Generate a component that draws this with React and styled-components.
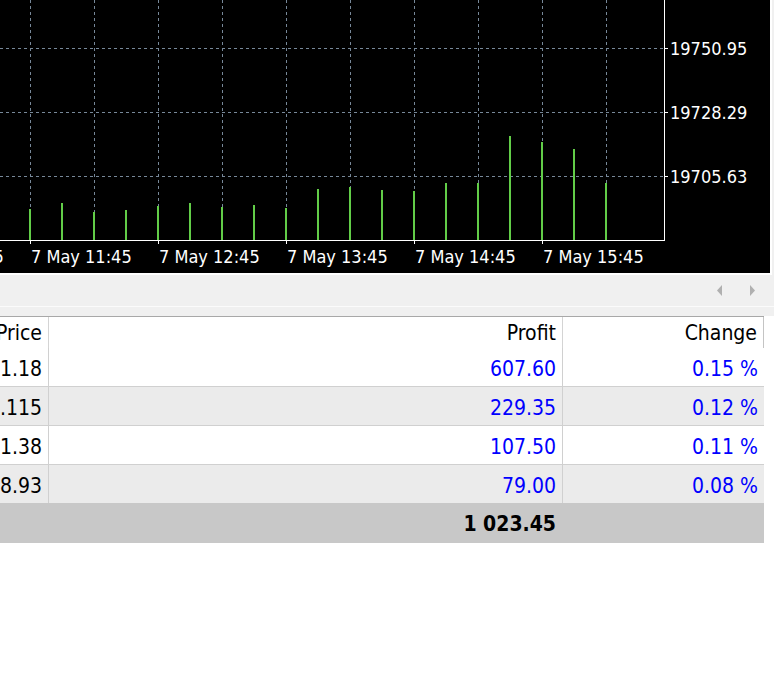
import React from 'react';
import styled, { createGlobalStyle } from 'styled-components';

const GlobalStyle = createGlobalStyle`
  html, body {
    margin: 0;
    padding: 0;
    background: #ffffff;
  }
  body {
    font-family: "DejaVu Sans Condensed", "DejaVu Sans", sans-serif;
  }
`;

// volume bars: x position and top of each bar (axis sits at y=240)
const bars = [
  [30, 209], [62, 203], [94, 212], [126, 210], [158, 206], [190, 203],
  [222, 207], [254, 205], [286, 208], [318, 189], [350, 187], [382, 190],
  [414, 191], [446, 183], [478, 183], [510, 136], [542, 142], [574, 149],
  [606, 183],
];

const priceLevels = [
  { y: 48, label: '19750.95' },
  { y: 112, label: '19728.29' },
  { y: 176, label: '19705.63' },
];

const timeLabels = [
  { x: -98, label: '7 May 10:45' },
  { x: 30, label: '7 May 11:45' },
  { x: 158, label: '7 May 12:45' },
  { x: 286, label: '7 May 13:45' },
  { x: 414, label: '7 May 14:45' },
  { x: 542, label: '7 May 15:45' },
];

const rows = [
  { price: '1.18', profit: '607.60', change: '0.15 %' },
  { price: '.115', profit: '229.35', change: '0.12 %' },
  { price: '1.38', profit: '107.50', change: '0.11 %' },
  { price: '8.93', profit: '79.00', change: '0.08 %' },
];

const PLOT_W = 664;
const PLOT_H = 240;

const VolumeChart = () => {
  const gridX = [];
  for (let x = 30; x < PLOT_W; x += 64) gridX.push(x);
  return (
    <ChartSvg width="770" height="273" viewBox="0 0 770 273">
      <rect x="0" y="0" width="770" height="273" fill="#000" />
      {gridX.map((x) => (
        <line key={`v${x}`} x1={x + 0.5} y1="0" x2={x + 0.5} y2={PLOT_H} stroke="#778899" strokeDasharray="3 3" />
      ))}
      {priceLevels.map((p) => (
        <line key={`h${p.y}`} x1="0" y1={p.y + 0.5} x2={PLOT_W} y2={p.y + 0.5} stroke="#778899" strokeDasharray="3 3" />
      ))}
      {bars.map(([x, top]) => (
        <rect key={`b${x}`} x={x - 1} y={top} width="2" height={PLOT_H - top} fill="#62cd48" />
      ))}
      <line x1={PLOT_W + 0.5} y1="0" x2={PLOT_W + 0.5} y2={PLOT_H + 1} stroke="#fff" />
      <line x1="0" y1={PLOT_H + 0.5} x2={PLOT_W + 1} y2={PLOT_H + 0.5} stroke="#fff" />
      {priceLevels.map((p) => (
        <g key={`l${p.y}`}>
          <line x1={PLOT_W} y1={p.y + 0.5} x2={PLOT_W + 4} y2={p.y + 0.5} stroke="#fff" />
          <AxisText x="670" y={p.y + 7}>{p.label}</AxisText>
        </g>
      ))}
      {timeLabels.map((t) => (
        <g key={`t${t.x}`}>
          <line x1={t.x + 0.5} y1={PLOT_H} x2={t.x + 0.5} y2={PLOT_H + 4} stroke="#fff" />
          <AxisText x={t.x + 1} y="263">{t.label}</AxisText>
        </g>
      ))}
    </ChartSvg>
  );
};

const Arrow = ({ dir }) => (
  <svg width="6" height="11" viewBox="0 0 6 11">
    {dir === 'left' ? (
      <polygon points="5,0 5,11 0,5.5" fill="#b0b0b0" />
    ) : (
      <polygon points="1,0 1,11 6,5.5" fill="#b0b0b0" />
    )}
  </svg>
);

const App = () => {
  return (
    <Page>
      <GlobalStyle />
      <ChartRow>
        <ChartPanel>
          <VolumeChart />
        </ChartPanel>
      </ChartRow>
      <TabBar>
        <ScrollButton><Arrow dir="left" /></ScrollButton>
        <ScrollButton><Arrow dir="right" /></ScrollButton>
      </TabBar>
      <Gap />
      <Table>
        <HeaderRow>
          <HeadCell>Price</HeadCell>
          <HeadCell>Profit</HeadCell>
          <HeadCell $last>Change</HeadCell>
        </HeaderRow>
        {rows.map((r, i) => (
          <BodyRow key={r.profit} $alt={i % 2 === 1}>
            <Cell>{r.price}</Cell>
            <Cell $blue>{r.profit}</Cell>
            <Cell $blue $last>{r.change}</Cell>
          </BodyRow>
        ))}
        <TotalRow>
          <TotalCell />
          <TotalCell>1 023.45</TotalCell>
          <TotalCell />
        </TotalRow>
      </Table>
    </Page>
  );
};

const Page = styled.div`
  width: 774px;
  height: 700px;
  background: #ffffff;
  overflow: hidden;
`;

const ChartRow = styled.div`
  display: flex;
  background: #f0f0f0;
`;

const ChartPanel = styled.div`
  width: 770px;
  height: 273px;
  border-right: 2px solid #ffffff;
  border-bottom: 2px solid #ffffff;
  background: #000;
`;

const ChartSvg = styled.svg`
  display: block;
`;

const AxisText = styled.text`
  fill: #ffffff;
  font-family: "DejaVu Sans Condensed", "DejaVu Sans", sans-serif;
  font-size: 18px;
`;

const TabBar = styled.div`
  height: 31px;
  background: #f0f0f0;
  border-bottom: 1px solid #fbfbfb;
  display: flex;
  justify-content: flex-end;
  align-items: center;
  gap: 22px;
  padding-right: 17px;
`;

const ScrollButton = styled.div`
  width: 10px;
  height: 12px;
  display: flex;
  align-items: center;
  justify-content: center;
`;

const Gap = styled.div`
  height: 9px;
  background: #f0f0f0;
`;

const Table = styled.div`
  width: 764px;
  border-top: 1px solid #a8a8a8;
  font-size: 21px;
`;

const columns = `
  display: grid;
  grid-template-columns: 49px 514px 201px;
`;

const HeaderRow = styled.div`
  ${columns}
  height: 31px;
  background: #ffffff;
`;

const HeadCell = styled.div`
  display: flex;
  align-items: center;
  justify-content: flex-end;
  padding: 1px 6px 0 0;
  white-space: nowrap;
  overflow: hidden;
  color: #000;
  border-right: 1px solid ${(p) => (p.$last ? '#c4c4c4' : '#d4d4d4')};
`;

const BodyRow = styled.div`
  ${columns}
  height: 38px;
  border-bottom: 1px solid #d0d0d0;
  background: ${(p) => (p.$alt ? '#ebebeb' : '#ffffff')};
  &:nth-last-child(2) {
    border-bottom: none;
  }
`;

const Cell = styled.div`
  display: flex;
  align-items: center;
  justify-content: flex-end;
  padding: 3px 6px 0 0;
  white-space: nowrap;
  overflow: hidden;
  color: ${(p) => (p.$blue ? '#0000ff' : '#000')};
  border-right: ${(p) => (p.$last ? 'none' : '1px solid #d0d0d0')};
`;

const TotalRow = styled.div`
  ${columns}
  height: 40px;
  background: #c8c8c8;
`;

const TotalCell = styled.div`
  display: flex;
  align-items: center;
  justify-content: flex-end;
  padding: 2px 7px 0 0;
  font-weight: bold;
  color: #000;
`;

export default App;
